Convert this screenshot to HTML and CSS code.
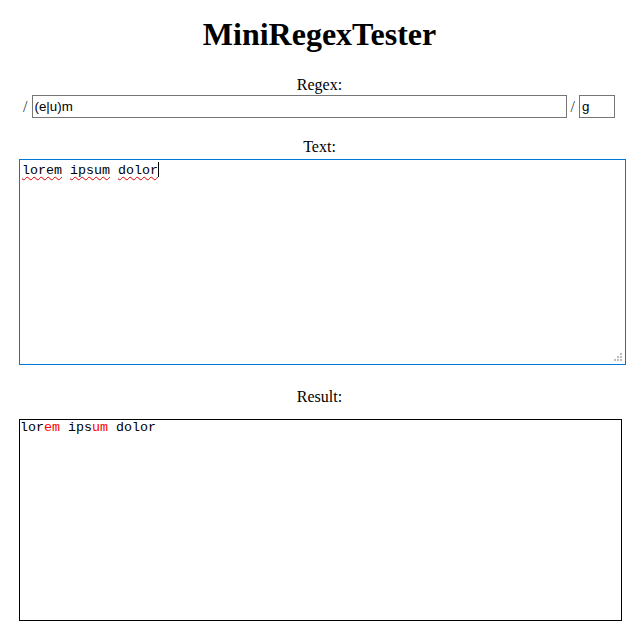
FILE: index.html
```html
<!DOCTYPE html>
<html>
<head>
<meta charset="utf-8">
<title>MiniRegexTester</title>
<link rel="stylesheet" href="styles.css">
</head>
<body>
<h1 class="title">MiniRegexTester</h1>

<div class="label label-regex">Regex:</div>
<div class="regex-row">
  <span class="slash">/</span>
  <input class="regex-input" type="text" value="(e|u)m">
  <span class="slash">/</span>
  <input class="flags-input" type="text" value="g">
</div>

<div class="label label-text">Text:</div>
<div class="text-box">
  <div class="text-content"><span class="misspelled">lorem</span> <span class="misspelled">ipsum</span> <span class="misspelled">dolor</span><span class="caret"></span></div>
  <svg class="resizer" width="9" height="9" viewBox="0 0 9 9">
    <rect x="6" y="0" width="2" height="2"/>
    <rect x="3" y="3" width="2" height="2"/>
    <rect x="6" y="3" width="2" height="2"/>
    <rect x="0" y="6" width="2" height="2"/>
    <rect x="3" y="6" width="2" height="2"/>
    <rect x="6" y="6" width="2" height="2"/>
  </svg>
</div>

<div class="label label-result">Result:</div>
<div class="result-box">lor<span class="match">em</span> ips<span class="match">um</span> dolor</div>
</body>
</html>
```

FILE: styles.css
```css
html, body {
  background: #fff;
}
body {
  margin: 0 8px;
  font-family: "Liberation Serif", "Times New Roman", serif;
  font-size: 16px;
  color: #000;
}
.title {
  margin: 16px 0 0;
  font-size: 32px;
  line-height: 37px;
  font-weight: bold;
  text-align: center;
}
.label {
  text-align: center;
  line-height: 18px;
}
.label-regex {
  margin-top: 23px;
}
.regex-row {
  margin: 1px 0 0 -1px;
  display: flex;
  justify-content: center;
  align-items: center;
  gap: 4px;
  height: 23px;
}
.slash {
  color: #333;
  line-height: 18px;
}
.regex-input,
.flags-input {
  box-sizing: border-box;
  height: 23px;
  margin: 0;
  padding: 1px 2px;
  border: 1px solid #767676;
  border-radius: 0;
  font-family: "Liberation Sans", Arial, sans-serif;
  font-size: 13.333px;
  color: #000;
  background: #fff;
  outline: none;
}
.regex-input {
  width: 535px;
}
.flags-input {
  width: 36px;
}
.label-text {
  margin-top: 20px;
}
.text-box {
  position: relative;
  box-sizing: border-box;
  width: 607px;
  height: 206px;
  margin: 3px 0 0 11px;
  padding: 2px;
  border: 1px solid #0078d7;
  font-family: "Liberation Mono", "Courier New", monospace;
  font-size: 13.333px;
  line-height: 15px;
}
.text-content {
  white-space: pre;
}
.misspelled {
  text-decoration: underline wavy #e00000;
  text-decoration-thickness: 1px;
  text-decoration-skip-ink: none;
  text-underline-offset: 2px;
}
.caret {
  display: inline-block;
  width: 0;
  height: 15px;
  border-left: 1px solid #000;
  vertical-align: -3px;
}
.resizer {
  position: absolute;
  right: 2px;
  bottom: 2px;
  fill: #bdbdbd;
}
.label-result {
  margin-top: 23px;
}
.result-box {
  box-sizing: border-box;
  width: 603px;
  height: 202px;
  margin: 13px 0 0 11px;
  border: 1px solid #000;
  font-family: "Liberation Mono", "Courier New", monospace;
  font-size: 13.333px;
  line-height: 15px;
  white-space: pre;
}
.match {
  color: #ff0000;
}
```
